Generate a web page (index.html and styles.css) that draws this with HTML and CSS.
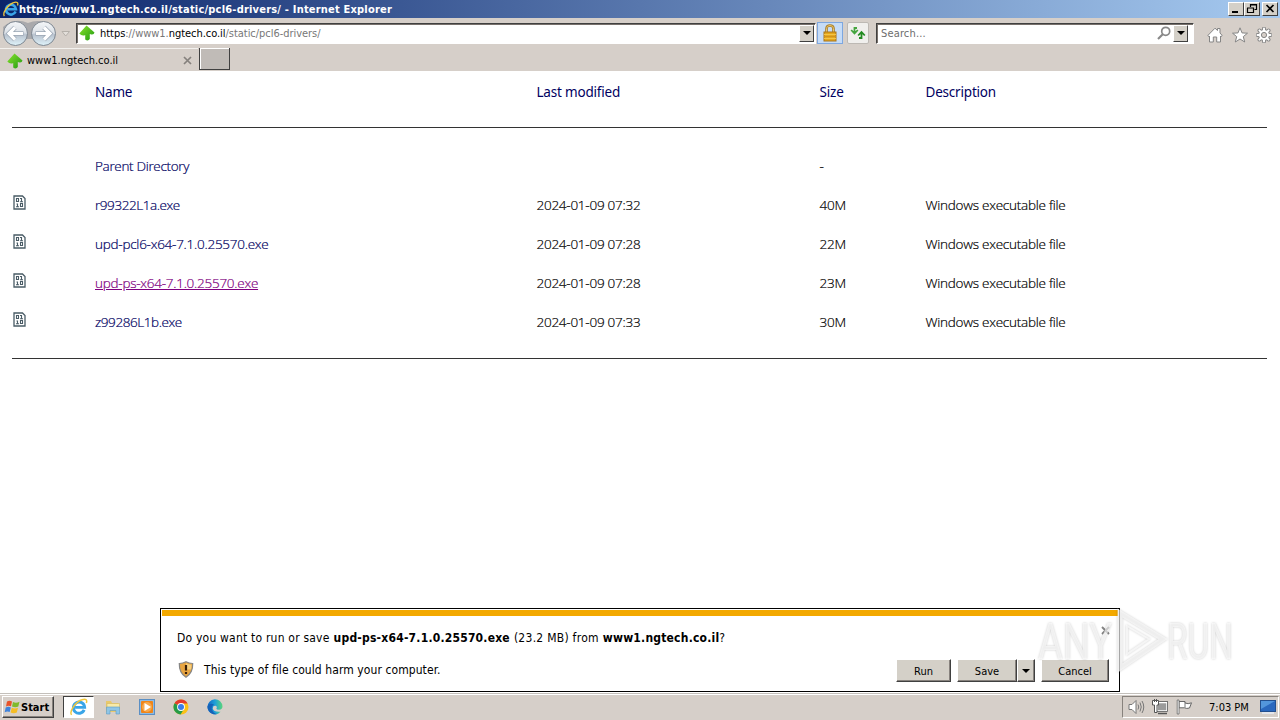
FILE: index.html
```html
<!DOCTYPE html>
<html lang="en">
<head>
    <meta charset="utf-8">
    <title>https://www1.ngtech.co.il/static/pcl6-drivers/ - Internet Explorer</title>
    <link rel="stylesheet" href="styles.css">
</head>
<body>
    <!-- shared icons -->
    <svg width="0" height="0" class="defs">
        <defs>
            <linearGradient id="g-green" x1="0" y1="0" x2="1" y2="1">
                <stop offset="0" stop-color="#8be32c"/>
                <stop offset="1" stop-color="#1f9a12"/>
            </linearGradient>
            <linearGradient id="g-nav" x1="0" y1="0" x2="0" y2="1">
                <stop offset="0" stop-color="#f4f6f8"/>
                <stop offset=".45" stop-color="#dde2e8"/>
                <stop offset=".55" stop-color="#b9c3cf"/>
                <stop offset="1" stop-color="#dff3fa"/>
            </linearGradient>
            <linearGradient id="g-edge" x1="0" y1="0" x2="1" y2="0">
                <stop offset="0" stop-color="#1267c4"/>
                <stop offset=".5" stop-color="#1f9fd8"/>
                <stop offset="1" stop-color="#5bd67a"/>
            </linearGradient>
            <symbol id="tree" viewBox="0 0 16 16">
                <path d="M7.500 .5 L15.500 7.500 Q15 9.800 12.500 9.500 L10.800 9 V14 Q9 16.500 6.200 14.500 V10 Q3 11.500 .3 8.500 Z" fill="url(#g-green)"/>
            </symbol>
            <symbol id="ie" viewBox="0 0 16 16">
                <path d="M12.6 10.6 A5 5 0 1 1 13 8.3 H4.5" fill="none" stroke="#3aa5e8" stroke-width="2.6"/>
                <path d="M1.4 15 C-1 12 5 3.500 10.500 1.600 C14 .3 15.600 1.500 14.500 4.500" fill="none" stroke="#f0c63c" stroke-width="1.300"/>
            </symbol>
            <symbol id="bin" viewBox="0 0 13 15">
                <path d="M1 1 H9.500 L12 3.500 V14 H1 Z" fill="#fff" stroke="#4a5c66" stroke-width="1.300"/>
                <path d="M3.500 3.500 H5.500 V6.500 H3.500 Z M8.500 3 V7 M7 3.500 H8 M7 6.700 H10 M4.500 8.500 V12 M3.500 9 H4.500 M3 11.700 H6 M7.500 8.500 H9.500 V11.500 H7.500 Z" fill="none" stroke="#4a5c66" stroke-width="1.100"/>
            </symbol>
        </defs>
    </svg>

    <div class="window">
        <div class="titlebar">
            <svg class="title-icon" width="16" height="16"><use href="#ie"/></svg>
            <span class="title-text">https://www1.ngtech.co.il/static/pcl6-drivers/ - Internet Explorer</span>
            <div class="win-buttons">
                <div class="win-btn"><svg width="14" height="12"><path d="M3 9 H9" stroke="#000" stroke-width="2"/></svg></div>
                <div class="win-btn"><svg width="14" height="12"><path d="M5.500 4 V1.500 H11.500 V6.500 H9.500 M5 2 H12 M3.500 5 H8.500 V9.500 H2.500 V5 M2 5 H9" fill="none" stroke="#000" stroke-width="1.200"/></svg></div>
                <div class="win-btn win-close"><svg width="14" height="12"><path d="M3.500 2 L10.500 9 M10.500 2 L3.500 9" stroke="#000" stroke-width="1.700"/></svg></div>
            </div>
        </div>

        <div class="navbar">
            <svg class="nav-arrows" width="70" height="28" viewBox="0 0 70 28">
                <path d="M3 8 Q14 -2 28 4 Q42 -2 55 9 L54 20 H5 Z" fill="#a9a9ac"/>
                <circle cx="15.500" cy="14.500" r="12" fill="url(#g-nav)" stroke="#7e8791"/>
                <circle cx="43.500" cy="14.500" r="12" fill="url(#g-nav)" stroke="#7e8791"/>
                <path d="M23.500 14.500 H9.500 M15 8.500 L9 14.500 L15 20.500" fill="none" stroke="#9aa6b4" stroke-width="4.600"/>
                <path d="M35.500 14.500 H49.500 M44 8.500 L50 14.500 L44 20.500" fill="none" stroke="#9aa6b4" stroke-width="4.600"/>
                <path d="M23 14.500 H9.500 M15 8.500 L9 14.500 L15 20.500" fill="none" stroke="#fff" stroke-width="3.200"/>
                <path d="M36 14.500 H49.500 M44 8.500 L50 14.500 L44 20.500" fill="none" stroke="#fff" stroke-width="3.200"/>
                <path d="M62 12.500 H69.500 L65.700 17 Z" fill="#e3dfda" stroke="#b5b0aa"/>
            </svg>
            <div class="address">
                <svg width="16" height="16"><use href="#tree"/></svg>
                <span class="url"><b>https</b>://www1.<b>ngtech.co.il</b>/static/pcl6-drivers/</span>
                <div class="drop"></div>
            </div>
            <div class="lock">
                <svg width="16" height="18" viewBox="0 0 16 18">
                    <path d="M4.500 8 V4.500 Q4.500 1.500 8 1.500 Q11.500 1.500 11.500 4.500 V8" fill="none" stroke="#a77b28" stroke-width="2.600"/>
                    <path d="M4.500 8 V4.500 Q4.500 1.500 8 1.500 Q11.500 1.500 11.500 4.500 V8" fill="none" stroke="#e9c66a" stroke-width="1"/>
                    <rect x="2" y="8" width="12" height="9" fill="#e6a81c" stroke="#a8741a"/>
                    <path d="M2 10.500 H14 M2 14.500 H14" stroke="#f2c44a"/>
                    <path d="M2 12.500 H14" stroke="#cf9320"/>
                </svg>
            </div>
            <div class="refresh">
                <svg width="16" height="16" viewBox="0 0 16 16">
                    <path d="M4.500 8 V3 H7 M1.200 5 L4.500 8.500 L7.800 5" fill="none" stroke="#45a53f" stroke-width="1.800"/>
                    <path d="M11.500 8 V13 H9 M8.200 10.500 L11.500 7 L14.800 10.500" fill="none" stroke="#238b22" stroke-width="1.800"/>
                </svg>
            </div>
            <div class="search">
                <span>Search...</span>
                <svg width="14" height="14" viewBox="0 0 14 14"><circle cx="8.700" cy="5.300" r="4" fill="none" stroke="#888" stroke-width="1.700"/><path d="M6 8 L1 13" stroke="#888" stroke-width="2.200"/></svg>
                <div class="drop"></div>
            </div>
            <div class="tools">
                <svg width="16" height="16" viewBox="0 0 16 16"><path d="M.8 8.500 L8 1.200 L10.500 3.500 V1.500 H13 V6 L15.200 8.500 L14 9.500 L13.500 9 V15 H9.700 V10 H6.300 V15 H2.500 V9 L2 9.500 Z" fill="#fff" stroke="#858585"/></svg>
                <svg width="16" height="16" viewBox="0 0 16 16"><path d="M8 .8 L10 5.900 L15.500 6.200 L11.300 9.600 L12.700 15 L8 12 L3.300 15 L4.700 9.600 L.5 6.200 L6 5.900 Z" fill="#fff" stroke="#858585"/></svg>
                <svg width="16" height="16" viewBox="0 0 16 16">
                    <path d="M8 1.500 V14.500 M1.500 8 H14.500 M3.400 3.400 L12.600 12.600 M12.600 3.400 L3.400 12.600" stroke="#858585" stroke-width="3.800" stroke-linecap="round"/>
                    <circle cx="8" cy="8" r="5.500" fill="#fff" stroke="#858585"/>
                    <path d="M8 1.500 V14.500 M1.500 8 H14.500 M3.400 3.400 L12.600 12.600 M12.600 3.400 L3.400 12.600" stroke="#fff" stroke-width="2" stroke-linecap="round"/>
                    <circle cx="8" cy="8" r="2.600" fill="#d6cfc9" stroke="#858585"/>
                </svg>
            </div>
        </div>

        <div class="tabs">
            <div class="tab">
                <svg width="16" height="16"><use href="#tree"/></svg>
                <span>www1.ngtech.co.il</span>
                <svg class="tab-close" width="9" height="9"><path d="M1 1 L8 8 M8 1 L1 8" stroke="#85817d" stroke-width="1.700"/></svg>
            </div>
            <div class="new-tab"></div>
        </div>

        <div class="page">
            <div class="row head">
                <span></span>
                <a>Name</a>
                <a>Last modified</a>
                <a class="size">Size</a>
                <a class="desc">Description</a>
            </div>
            <hr>
            <div class="row">
                <span></span>
                <a class="parent">Parent Directory</a>
                <span></span>
                <span>-</span>
                <span></span>
            </div>
            <div class="row">
                <svg width="13" height="15"><use href="#bin"/></svg>
                <a class="short">r99322L1a.exe</a>
                <span class="date">2024-01-09 07:32</span>
                <span>40M</span>
                <span class="kind">Windows executable file</span>
            </div>
            <div class="row">
                <svg width="13" height="15"><use href="#bin"/></svg>
                <a>upd-pcl6-x64-7.1.0.25570.exe</a>
                <span class="date">2024-01-09 07:28</span>
                <span>22M</span>
                <span class="kind">Windows executable file</span>
            </div>
            <div class="row">
                <svg width="13" height="15"><use href="#bin"/></svg>
                <a class="active">upd-ps-x64-7.1.0.25570.exe</a>
                <span class="date">2024-01-09 07:28</span>
                <span>23M</span>
                <span class="kind">Windows executable file</span>
            </div>
            <div class="row">
                <svg width="13" height="15"><use href="#bin"/></svg>
                <a class="short">z99286L1b.exe</a>
                <span class="date">2024-01-09 07:33</span>
                <span>30M</span>
                <span class="kind">Windows executable file</span>
            </div>
            <hr class="last">
        </div>

        <div class="taskbar">
            <div class="start">
                <svg width="17" height="16" viewBox="0 0 17 16">
                    <path d="M3 2.500 Q5.500 .8 8 2.500 L7 7.300 Q4.500 6 2 7.500 Z" fill="#e8532a"/>
                    <path d="M9 3 Q12 4.500 15.500 2.800 L14.300 7.600 Q11.500 9 8 7.600 Z" fill="#7fba2c"/>
                    <path d="M1.700 8.500 Q4.500 7 6.800 8.400 L5.700 13 Q3.500 11.700 .7 13.200 Z" fill="#3f83dc"/>
                    <path d="M7.800 8.700 Q11 10.200 14 8.700 L12.800 13.500 Q9.500 15 6.600 13.400 Z" fill="#f5bd25"/>
                </svg>
                <b>Start</b>
            </div>
            <div class="task-active"><svg width="18" height="18"><use href="#ie"/></svg></div>
            <svg class="task" width="16" height="16" viewBox="0 0 16 16">
                <path d="M1 2 H6 L7 4 H13 V13 H1 Z" fill="#e9c96b"/>
                <path d="M2 4.500 H14.500 V10 H2 Z" fill="#f8eaa8" stroke="#d4b661" stroke-width=".6"/>
                <path d="M1.500 8 H14.500 V15 H11 V11.500 H5 V15 H1.500 Z" fill="#8fc5e6" stroke="#5d9cc6" stroke-width=".6"/>
            </svg>
            <svg class="task" width="16" height="16" viewBox="0 0 16 16">
                <rect x=".5" y=".5" width="15" height="15" fill="#8dbbe4" stroke="#5b8fc4"/>
                <rect x="2" y="2" width="12" height="12" rx="1" fill="#f08518"/>
                <circle cx="8" cy="8" r="5" fill="#f7a94c"/>
                <path d="M5.500 4 L12 8 L5.500 12 Z" fill="#fff"/>
            </svg>
            <svg class="task" width="16" height="16" viewBox="0 0 16 16">
                <circle cx="8" cy="8" r="7.500" fill="#fbc116"/>
                <path d="M8 8 L1.500 4.200 A7.500 7.500 0 0 1 14.600 4.500 H8 Z" fill="#e33b2e"/>
                <path d="M8 8 L1.500 4.200 A7.500 7.500 0 0 0 7.500 15.500 L11 10 Z" fill="#259b48"/>
                <circle cx="8" cy="8" r="3.900" fill="#fff"/>
                <circle cx="8" cy="8" r="3" fill="#3b7de8"/>
            </svg>
            <svg class="task" width="16" height="16" viewBox="0 0 16 16">
                <path d="M.5 8 A7.500 7.500 0 0 1 15.500 7.500 Q15.500 10.500 12 10.800 Q9 10.800 9.500 9.300 Q10.500 7.500 8.500 6.800 Q5.500 6.500 5.800 9.800 Q6.500 13.300 13.600 12.800 A7.500 7.500 0 0 1 .5 8 Z" fill="url(#g-edge)"/>
                <path d="M.6 7 Q3 3.500 7 5.500 Q4 7 4.800 10.500 Q6 14 10 15.100 A7.500 7.500 0 0 1 .6 7 Z" fill="#1562b8"/>
            </svg>
            <div class="tray">
                <svg width="17" height="16" viewBox="0 0 17 16">
                    <path d="M1 5.500 H4 L8 1.500 V14.500 L4 10.500 H1 Z" fill="#fff" stroke="#777"/>
                    <path d="M10 5.500 Q11.500 8 10 10.500 M12 3.500 Q14.500 8 12 12.500 M14 2 Q17.500 8 14 14" fill="none" stroke="#777"/>
                </svg>
                <svg width="17" height="16" viewBox="0 0 17 16">
                    <rect x="5" y="3.500" width="10" height="8.500" fill="#9b9b9b" stroke="#fff" stroke-width="1.500"/>
                    <rect x="4.500" y="2.500" width="11" height="10" fill="none" stroke="#555" stroke-width=".8"/>
                    <path d="M6 14.500 H15" stroke="#555" stroke-width="1.500"/>
                    <path d="M.5 1.500 H6.500 V6 H5 V13.500 H2.500 V6 H.5 Z" fill="#fff" stroke="#555"/>
                    <path d="M2.500 0 V3 M4.500 0 V3" stroke="#555"/>
                </svg>
                <svg width="17" height="16" viewBox="0 0 17 16">
                    <path d="M3 2.500 H9 V4 Q12 5.500 15.500 3.800 L13.500 9 Q10.500 10 8.500 8.800 H3 Z" fill="#fff" stroke="#666"/>
                    <path d="M9 3.500 V8.500" stroke="#777"/>
                    <path d="M1.200 1 H3 V15 H1.200 Z" fill="#fff" stroke="#666" stroke-width=".8"/>
                </svg>
                <span class="clock">7:03 PM</span>
                <svg class="desktop" width="16" height="14" viewBox="0 0 16 14">
                    <rect x=".5" y=".5" width="15" height="11" fill="#2a68be" stroke="#234f8e"/>
                    <path d="M1 1 H15 L1 9 Z" fill="#5396dc"/>
                    <path d="M2 13 H14" stroke="#e8eef6" stroke-width="1.500"/>
                </svg>
            </div>
        </div>

        <div class="download">
            <div class="question">
                <span class="q1">Do you want to run or save</span>
                <b class="q2">upd-ps-x64-7.1.0.25570.exe</b>
                <span class="q3">(23.2 MB) from</span>
                <b class="q4">www1.ngtech.co.il</b><span>?</span>
                <svg class="bar-close" width="9" height="9"><path d="M1 1 L8 8 M8 1 L1 8" stroke="#858585" stroke-width="1.900"/></svg>
            </div>
            <div class="answer">
                <svg width="16" height="17" viewBox="0 0 16 17">
                    <path d="M8 .8 Q11 2.500 14.700 2.500 Q15 12 8 16.200 Q1 12 1.300 2.500 Q5 2.500 8 .8 Z" fill="#e9a540" stroke="#858585" stroke-width="1.200"/>
                    <path d="M8 2.300 Q10.500 3.600 13.500 3.700 Q13.500 6 13 8.500 H8 Z" fill="#f6cf7e"/>
                    <path d="M8 4 V9.500 M8 11 V13" stroke="#3a1e08" stroke-width="2.200"/>
                </svg>
                <span class="warn">This type of file could harm your computer.</span>
                <div class="btn run">Run</div>
                <div class="btn save">Save</div>
                <div class="btn more"></div>
                <div class="btn cancel">Cancel</div>
            </div>
        </div>

        <svg class="watermark" width="230" height="84" viewBox="0 0 230 84">
            <g class="mark-text">
                <text x="8" y="57" textLength="74" lengthAdjust="spacingAndGlyphs">ANY</text>
                <text x="137" y="57" textLength="66" lengthAdjust="spacingAndGlyphs">RUN</text>
            </g>
            <path class="mark-play" d="M90 11 L133 37 L90 66 Z"/>
            <path class="mark-play thin" d="M97 24 L119 37 L97 52 Z"/>
        </svg>
    </div>
</body>
</html>
```
FILE: styles.css
```css
body {
    margin: 0;
    background: #fff;
    overflow: hidden;
    font-family: "DejaVu Sans Condensed", "DejaVu Sans", sans-serif;
    font-size: 11px;
    color: #000;
}

svg {
    display: block;
    flex: none;
}

.defs {
    position: absolute;
}

.window {
    position: relative;
    display: flex;
    flex-direction: column;
    width: 1280px;
    height: 720px;
    white-space: nowrap;
}

/* title */
.titlebar {
    display: flex;
    align-items: center;
    height: 18px;
    padding: 0 2px 0 3px;
    background: linear-gradient(to right, #0a246a, #a6caf0);
    color: #fff;
}

.title-text {
    flex: 1;
    font-weight: bold;
    letter-spacing: 0.2px;
}

.win-buttons {
    display: flex;
}

.win-btn {
    box-sizing: border-box;
    width: 16px;
    height: 14px;
    background: #d4d0c8;
    border: 1px solid;
    border-color: #fff #404040 #404040 #fff;
    overflow: hidden;
}

.win-close {
    margin-left: 2px;
}

/* address row */
.navbar {
    display: flex;
    align-items: center;
    box-sizing: border-box;
    height: 30px;
    background: #d6cfc9;
}

.nav-arrows {
    margin-right: 6px;
}

.address,
.search {
    display: flex;
    align-items: center;
    box-sizing: border-box;
    height: 21px;
    background: #fff;
    border: 1px solid;
    border-color: #404040 #fff #fff #404040;
    box-shadow: inset 1px 1px #77706b;
}

.address {
    width: 740px;
    padding: 0 1px 0 2px;
}

.url {
    flex: 1;
    margin: 1px 0 0 5px;
    color: #777;
    letter-spacing: -0.04px;
}

.url b {
    font-weight: normal;
    color: #000;
}

.drop {
    box-sizing: border-box;
    width: 15px;
    height: 17px;
    background: #d4d0c8;
    border: 1px solid;
    border-color: #fff #404040 #404040 #fff;
    display: flex;
    align-items: center;
    justify-content: center;
}

.drop::after,
.more::after {
    content: "";
    border: 4px solid transparent;
    border-top-color: #000;
    border-bottom: 0;
}

.lock,
.refresh {
    display: flex;
    align-items: center;
    justify-content: center;
    box-sizing: border-box;
    height: 22px;
}

.lock {
    width: 26px;
    margin-left: 1px;
    background: #c6dcf7;
    border: 1px solid #7da7e0;
}

.refresh {
    width: 22px;
    margin-left: 4px;
    background: #f0efed;
    border: 1px solid #bdb9b4;
    border-radius: 2px;
}

.search {
    width: 318px;
    margin-left: 7px;
    padding: 0 5px 0 4px;
    color: #6d6d6d;
}

.search span {
    flex: 1;
    margin-top: 1px;
    letter-spacing: 0.15px;
}

.search .drop {
    margin-left: 2px;
}

.tools {
    display: flex;
    gap: 8.5px;
    margin: 3px 0 0 13px;
}

/* tabs */
.tabs {
    display: flex;
    box-sizing: border-box;
    height: 23px;
    background: #d6cfc9;
}

.tab {
    display: flex;
    align-items: center;
    box-sizing: border-box;
    width: 198px;
    padding: 1px 6px 0 7px;
    border-top: 1px solid #f3f1ee;
}

.tab span {
    flex: 1;
    margin-left: 4px;
}

.new-tab {
    box-sizing: border-box;
    width: 31px;
    height: 22px;
    margin-left: 1px;
    background: #c0bbb7;
    border: solid #404040;
    border-width: 0 1px 1px 1px;
    box-shadow: inset 1px 1px #fff;
}

/* directory listing */
.page {
    flex: 1;
    padding: 1px 13px 0 12px;
    font-family: "Open Sans", "Noto Sans", sans-serif;
    font-size: 13.5px;
    font-weight: 300;
}

.row {
    display: grid;
    grid-template-columns: 83px 441.5px 283px 106px 1fr;
    align-items: center;
    height: 39px;
    letter-spacing: -0.25px;
    -webkit-text-stroke: 0.2px;
}

.row > * {
    justify-self: start;
}

.row svg {
    margin: 0 0 4px 1px;
}

.row a {
    color: #00005f;
}

.row .parent {
    letter-spacing: -0.32px;
}

.row .short {
    letter-spacing: -0.42px;
}

.row .active {
    color: #800080;
    text-decoration: underline;
}

.head {
    font-family: "Noto Sans", sans-serif;
    font-weight: 400;
    letter-spacing: -0.2px;
    -webkit-text-stroke: 0;
}

.page hr {
    height: 1px;
    margin: 16px 0 18px;
    border: 0;
    background: #333;
}

.page .last {
    margin: 17px 0 0;
}

/* taskbar */
.taskbar {
    display: flex;
    align-items: center;
    box-sizing: border-box;
    height: 27px;
    padding: 0 1px 0 2px;
    background: #d6cfc9;
    border-top: 1px solid #c4c0bb;
    box-shadow: inset 0 1px #fff;
}

.start {
    display: flex;
    align-items: center;
    box-sizing: border-box;
    width: 52px;
    height: 22px;
    padding-left: 1px;
    border: 1px solid;
    border-color: #fff #404040 #404040 #fff;
    box-shadow: inset -1px -1px #87827d;
}

.task-active {
    display: flex;
    align-items: center;
    justify-content: center;
    box-sizing: border-box;
    width: 31px;
    height: 22px;
    margin: 0 -7px 0 9px;
    background: #fff;
    border: 1px solid;
    border-color: #404040 #fff #fff #404040;
}

.task {
    margin-left: 18px;
}

.tray {
    display: flex;
    align-items: center;
    box-sizing: border-box;
    width: 157px;
    height: 22px;
    margin-left: auto;
    padding: 0 2px 0 5px;
    gap: 7px;
    border: 1px solid;
    border-color: #87827d #fff #fff #87827d;
}

.clock {
    margin-left: 9px;
}

.desktop {
    margin-left: auto;
}

/* download prompt lies over the page */
.download {
    position: absolute;
    left: 160px;
    top: 608px;
    box-sizing: border-box;
    width: 960px;
    height: 84px;
    padding: 1px;
    background: #fff;
    border: 1px solid #000;
    font-size: 12px;
}

.download::before {
    content: "";
    display: block;
    height: 6px;
    background: #f3a900;
}

.question {
    display: flex;
    align-items: center;
    height: 43px;
    padding: 0 8px 0 15px;
    letter-spacing: 0.21px;
}

.question b {
    margin: 0 4px;
}

.question .q3 {
    letter-spacing: 0.27px;
}

.question .q4 {
    margin-right: 0;
}

.bar-close {
    margin: -15px 0 0 auto;
}

.answer {
    display: flex;
    align-items: center;
    height: 21px;
    padding: 0 9px 0 16px;
}

.warn {
    flex: 1;
    margin: 1px 0 0 10px;
    letter-spacing: 0.08px;
}

.btn {
    display: flex;
    align-items: center;
    justify-content: center;
    box-sizing: border-box;
    height: 23px;
    margin-top: 2px;
    padding-top: 1px;
    background: #d4d0c8;
    border: 1px solid;
    border-color: #fff #404040 #404040 #fff;
    box-shadow: inset -1px -1px #87827d;
    font-size: 11px;
}

.run {
    width: 55px;
}

.save {
    width: 60px;
    margin-left: 6px;
}

.more {
    width: 18px;
}

.cancel {
    width: 68px;
    margin-left: 6px;
}

.watermark {
    position: absolute;
    left: 1030px;
    top: 602px;
    filter: drop-shadow(0 0 1px rgba(0, 0, 0, .3));
}

.mark-text {
    fill: rgba(255, 255, 255, .65);
    font-family: Roboto, sans-serif;
    font-size: 50px;
}

.mark-play {
    fill: none;
    stroke: rgba(255, 255, 255, .65);
    stroke-width: 5;
}

.mark-play.thin {
    stroke-width: 2;
}
```
